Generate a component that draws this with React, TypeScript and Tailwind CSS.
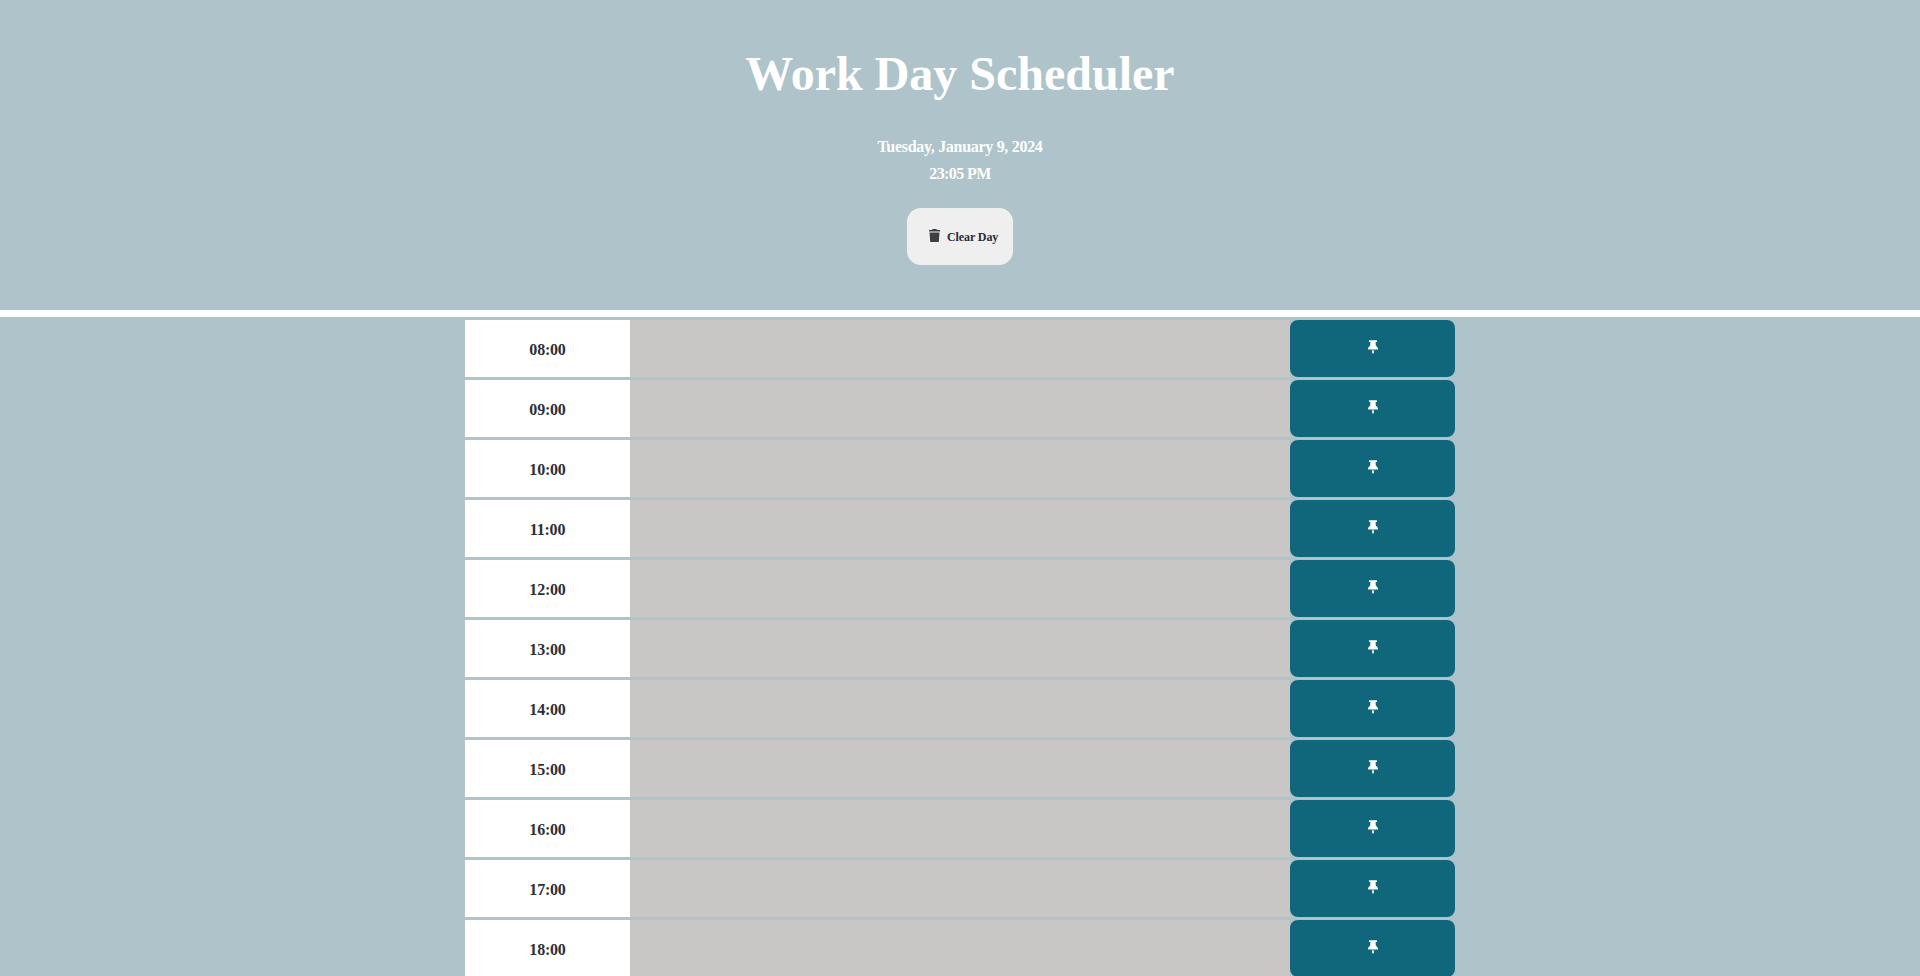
const hours = ['08:00', '09:00', '10:00', '11:00', '12:00', '13:00', '14:00', '15:00', '16:00', '17:00', '18:00'];

function TrashIcon() {
  return (
    <svg viewBox="0 0 22 26" className="h-[13px] w-[11px] -translate-y-px fill-[#3f3f43]">
      <path d="M7 0h8l1 2h6v3H0V2h6zM1 7h20l-1.500 19h-17z" />
    </svg>
  );
}

function PinIcon() {
  return (
    <svg viewBox="0 0 384 512" className="h-[14px] w-[10px] fill-white">
      <path d="M32 32C32 14.300 46.300 0 64 0h256c17.700 0 32 14.300 32 32s-14.300 32-32 32h-29.500l11.400 148.200c36.700 19.900 65.700 53.200 79.500 94.700l1 3c3.300 9.800 1.600 20.500-4.400 28.800S362.100 352 352 352H32c-10.300 0-19.900-4.900-26-13.300s-7.700-19.100-4.400-28.800l1-3c13.800-41.500 42.800-74.800 79.500-94.700L93.500 64H64C46.300 64 32 49.700 32 32zM160 384h64v96c0 17.700-14.300 32-32 32s-32-14.300-32-32V384z" />
    </svg>
  );
}

export default function App() {
  return (
    <div className="min-h-screen bg-[#aec4ca] font-['Liberation_Serif',serif]">
      <header className="flex h-[317px] flex-col items-center border-b-[7px] border-white">
        <h1 className="mt-[41px] text-[48px] leading-[66px] font-bold text-white">Work Day Scheduler</h1>
        <p className="mt-[26px] text-[16px] leading-[27px] font-bold tracking-[-0.3px] text-white">Tuesday, January 9, 2024</p>
        <p className="text-[16px] leading-[27px] font-bold tracking-[-0.6px] text-white">23:05 PM</p>
        <button className="mt-[21px] flex h-[57px] w-[106px] items-center gap-[7px] rounded-[14px] bg-[#efefef] pl-[22px] text-[12px] font-bold tracking-[-0.1px] text-[#2c2c34]">
          <TrashIcon />
          Clear Day
        </button>
      </header>
      <main className="mx-auto mt-[3px] flex w-[990px] flex-col gap-[3px]">
        {hours.map((hour) => (
          <div key={hour} className="flex h-[57px]">
            <div className="flex w-[165px] items-center justify-center bg-white pt-[3px] text-[16px] font-bold tracking-[-0.2px] text-[#2c2f38]">{hour}</div>
            <div className="flex-1 bg-[#c9c7c5]" />
            <button className="flex w-[165px] items-center justify-center rounded-[8px] bg-[#10667a] pb-[3px]">
              <PinIcon />
            </button>
          </div>
        ))}
      </main>
    </div>
  );
}
